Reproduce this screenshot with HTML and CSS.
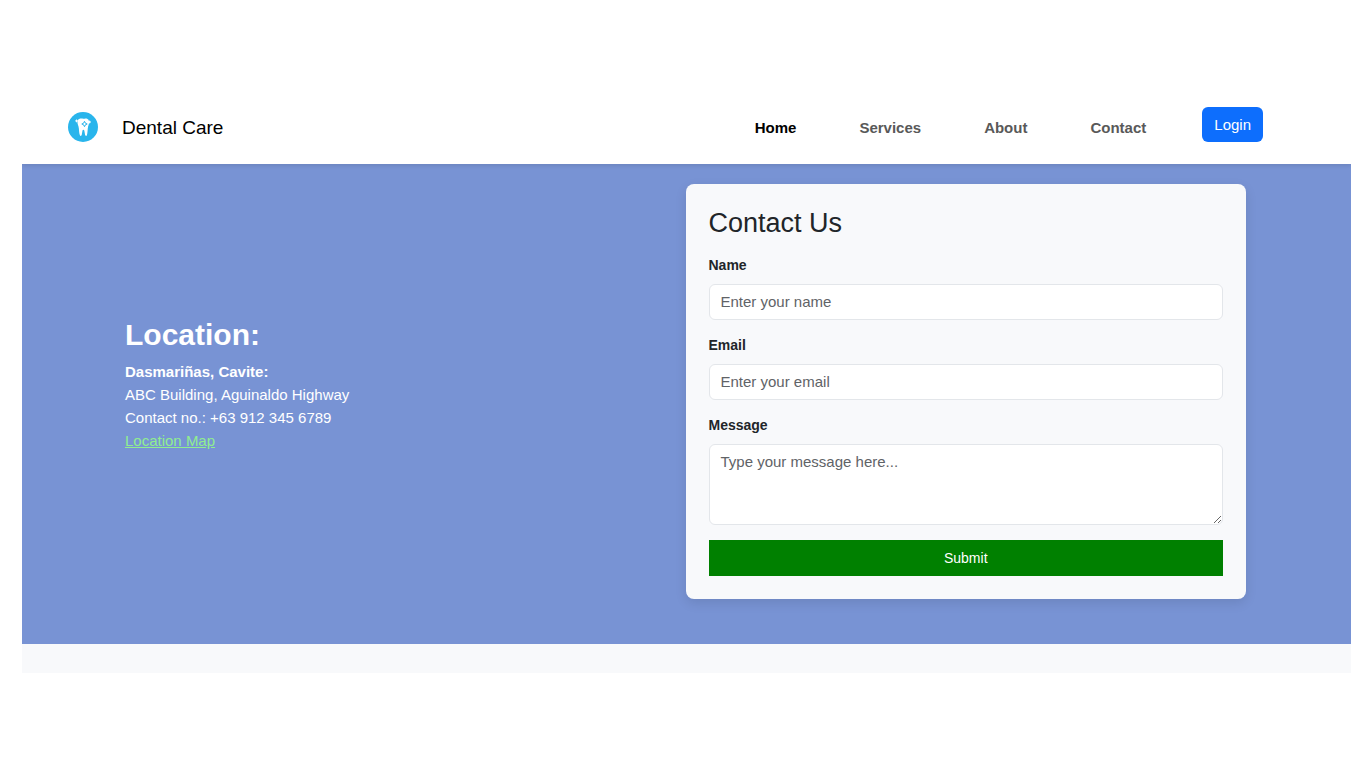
FILE: index.html
```html
<!DOCTYPE html>
<html lang="en">
<head>
<meta charset="utf-8">
<meta name="viewport" content="width=device-width, initial-scale=1">
<title>Dental Care</title>
<link rel="stylesheet" href="styles.css">
</head>
<body>
<div class="page">
  <header class="navbar">
    <a class="brand" href="#">
      <svg class="brand-logo" viewBox="0 0 30 30" aria-hidden="true">
        <circle cx="15" cy="15" r="15" fill="#29b5ec"/>
        <path d="M10 7.800C11.800 6 13.600 6.300 15.300 6.800C17 6.300 19 5.900 20.500 7.800C21.700 10 20.900 12.400 20.100 14.500C19.500 17 19.700 21 18.900 23.200C18.600 24.200 17.300 24.100 17.100 23.100L16.300 18.500C16.100 17.500 14.700 17.500 14.500 18.500L13.700 23.100C13.500 24.100 12.200 24.200 11.900 23.200C10.900 21 11.200 17 10.500 14.500C9.700 12.400 8.900 10 10 7.800Z" fill="#fff"/>
        <path d="M16.500 9.300L17.400 11.200L19.200 12L17.400 12.800L16.500 14.700L15.600 12.800L13.800 12L15.600 11.200Z" fill="#fff" stroke="#29b5ec" stroke-width="1"/>
        <path d="M8.600 7.500V10.300M7.200 8.900H10M21.600 8.600V11.400M20.200 10H23" stroke="#fff" stroke-width="1"/>
      </svg>
      <span>Dental Care</span>
    </a>
    <nav class="menu">
      <a class="menu-link active" href="#home">Home</a>
      <a class="menu-link" href="#services">Services</a>
      <a class="menu-link" href="#about">About</a>
      <a class="menu-link" href="#contact">Contact</a>
      <button class="login" type="button">Login</button>
    </nav>
  </header>
  <main class="hero">
    <section class="location">
      <h1 class="location-title">Location:</h1>
      <p class="location-text">
        <strong>Dasmariñas, Cavite:</strong><br>
        ABC Building, Aguinaldo Highway<br>
        Contact no.: +63 912 345 6789<br>
        <a class="map-link" href="#map">Location Map</a>
      </p>
    </section>
    <form class="card">
      <h2 class="card-title">Contact Us</h2>
      <div class="field">
        <label class="label" for="name">Name</label>
        <input class="control" id="name" type="text" placeholder="Enter your name">
      </div>
      <div class="field">
        <label class="label" for="email">Email</label>
        <input class="control" id="email" type="email" placeholder="Enter your email">
      </div>
      <div class="field">
        <label class="label" for="message">Message</label>
        <textarea class="control message" id="message" rows="3" placeholder="Type your message here..."></textarea>
      </div>
      <button class="submit" type="submit">Submit</button>
    </form>
  </main>
  <footer class="footer"></footer>
</div>
</body>
</html>
```
FILE: styles.css
```css
* {
  box-sizing: border-box;
}

body {
  margin: 0;
  background: #fff;
  color: #212529;
  font-family: "Liberation Sans", Arial, sans-serif;
  font-size: 15px;
  line-height: 23px;
}

.page {
  padding: 90px 15px 90px 22px;
}

.navbar {
  position: relative;
  display: flex;
  align-items: center;
  justify-content: space-between;
  min-height: 74px;
  padding: 0 88px 0 46px;
  background: #fff;
  box-shadow: 0 2px 4px rgba(0, 0, 0, 0.1);
  clip-path: inset(0 0 -8px 0);
}

.brand {
  display: flex;
  align-items: center;
  gap: 24px;
  color: #000;
  font-size: 19px;
  text-decoration: none;
}

.brand-logo {
  width: 30px;
  height: 30px;
}

.menu {
  display: flex;
  align-items: center;
  gap: 63px;
}

.menu-link {
  color: #595959;
  font-weight: bold;
  text-decoration: none;
}

.menu-link.active {
  color: #000;
}

.login {
  margin: 0 0 6px -7px;
  padding: 6px 12px;
  border: 0;
  border-radius: 6px;
  background: #0d6efd;
  color: #fff;
  font: inherit;
}

.hero {
  display: grid;
  grid-template-columns: 1fr 1fr;
  align-items: center;
  padding: 20px 105px 45px 103px;
  background: #7893d4;
}

.location {
  padding-bottom: 16px;
  color: #fff;
}

.location-title {
  margin: 0 0 7px;
  font-size: 30px;
  line-height: 37px;
}

.location-text {
  margin: 0;
}

.map-link {
  color: #90ee90;
}

.card {
  display: flex;
  flex-direction: column;
  gap: 15px;
  padding: 23px;
  border-radius: 8px;
  background: #f8f9fb;
  box-shadow: 0 4px 12px rgba(0, 0, 0, 0.1);
}

.card-title {
  margin: 0;
  font-size: 27px;
  font-weight: normal;
  line-height: 33px;
}

.field {
  display: flex;
  flex-direction: column;
  gap: 8px;
}

.label {
  font-size: 14px;
  font-weight: bold;
  line-height: 21px;
}

.control {
  width: 100%;
  min-height: 36px;
  padding: 4px 11px 6px;
  border: 1px solid #e3e6ea;
  border-radius: 6px;
  background: #fff;
  color: #212529;
  font: inherit;
}

.control::placeholder {
  color: #5f6367;
  opacity: 1;
}

.message {
  display: block;
  padding: 5px 11px;
  resize: vertical;
}

.submit {
  min-height: 36px;
  padding: 6px 12px;
  border: 0;
  background: #008000;
  color: #fff;
  font: inherit;
  font-size: 14px;
}

.footer {
  min-height: 29px;
  background: #f8f9fb;
}
```
